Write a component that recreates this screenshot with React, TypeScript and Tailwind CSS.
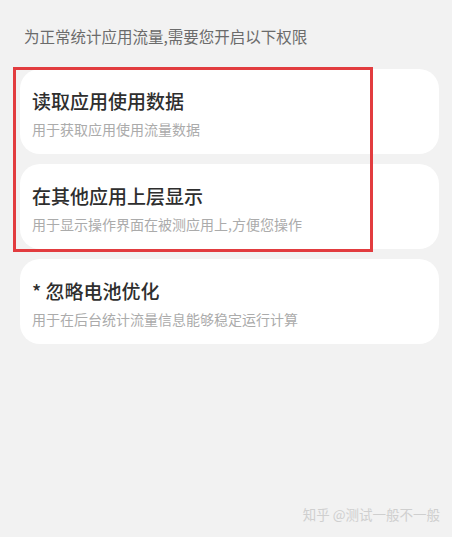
import React from 'react';

const items = [
  { title: '读取应用使用数据', desc: '用于获取应用使用流量数据' },
  { title: '在其他应用上层显示', desc: '用于显示操作界面在被测应用上,方便您操作' },
  { title: '* 忽略电池优化', desc: '用于在后台统计流量信息能够稳定运行计算' },
];

export default function App() {
  return (
    <div
      className="w-full h-[537px] bg-[#f2f2f2] flex flex-col overflow-hidden"
      style={{ fontFamily: '"Noto Sans CJK SC", "Noto Sans", sans-serif' }}
    >
      <p className="pl-[24px] pt-[25px] text-[15.5px] leading-[22px] text-[#6b6b6b]">
        为正常统计应用流量,需要您开启以下权限
      </p>

      {/* Permission cards */}
      <div className="relative mt-[22px] px-[20px] pr-[13px] flex flex-col gap-[10px]">
        {items.map((item) => (
          <div key={item.title} className="h-[85px] bg-white rounded-[20px] pl-[12px] pt-[20px]">
            <div className="text-[19px] leading-[24px] font-medium text-[#2e2e2e]">{item.title}</div>
            <div className="mt-[6px] text-[14px] leading-[20px] text-[#ababab]">{item.desc}</div>
          </div>
        ))}

        {/* Red highlight box */}
        <div className="absolute left-[13px] top-[-2px] w-[360px] h-[185px] border-[3px] border-[#e23c3f] pointer-events-none" />
      </div>

      <div className="mt-auto mb-[14px] pr-[12px] text-right text-[13.5px] leading-[18px] text-[#cfcfcf]">
        知乎 @测试一般不一般
      </div>
    </div>
  );
}
